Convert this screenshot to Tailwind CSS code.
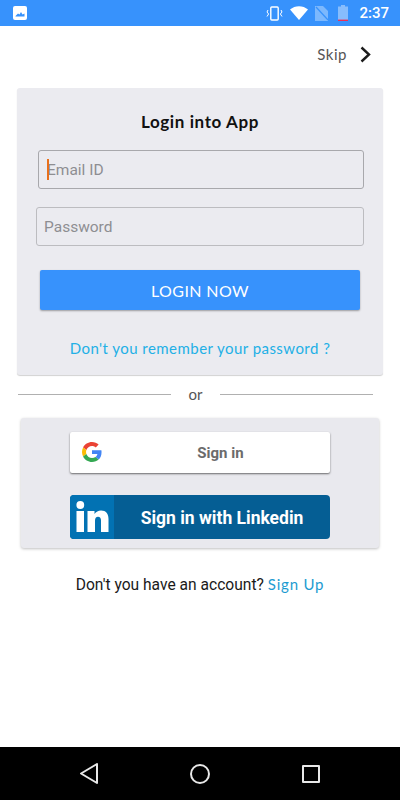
<!DOCTYPE html>
<html lang="en">
  <head>
    <meta charset="UTF-8" />
    <meta name="viewport" content="width=device-width, initial-scale=1.0" />
    <script src="https://cdn.jsdelivr.net/npm/@tailwindcss/browser@4"></script>
    <title>Login</title>
  </head>

  <body class="w-[400px] h-[800px] overflow-hidden bg-white flex flex-col font-['Roboto',sans-serif]">
    <!-- status bar -->
    <div class="h-[26px] shrink-0 bg-[#3792fc] flex items-center pl-[13px] pr-[11px] text-white">
      <svg width="14" height="14" viewBox="0 0 14 14">
        <rect width="14" height="14" rx="2" fill="#fff" />
        <path d="M2.5 10 L5 7.5 L6.5 8.6 L8 6 L9.5 8.4 L11.5 7.6 V10.5 H2.5Z" fill="#3792fc" />
      </svg>
      <div class="ml-auto flex items-center">
        <svg width="17" height="15" viewBox="0 0 17 15" fill="none" stroke="#fff">
          <rect x="4.8" y="1" width="7.4" height="13" rx="1" stroke-width="1.4" />
          <path d="M2 4 L1 6 L2.6 8 L1 10.5 M15 4 L16 6 L14.4 8 L16 10.5" stroke-width="1" />
        </svg>
        <svg class="ml-[7px]" width="18" height="14" viewBox="0 0 18 14">
          <path d="M0 3.6 C5 -1 13 -1 18 3.6 L9 14Z" fill="#fff" />
        </svg>
        <svg class="ml-[7px]" width="13" height="15" viewBox="0 0 13 15">
          <path d="M0 15 V0 H8 L13 5 V15Z" fill="#fff" fill-opacity="0.35" />
          <path d="M1 1 L13 14" stroke="#3792fc" stroke-width="1.2" />
        </svg>
        <svg class="ml-[10px]" width="10" height="16" viewBox="0 0 10 16">
          <path d="M3 0 H7 V1.5 H10 V16 H0 V1.5 H3Z" fill="#fff" fill-opacity="0.4" />
          <rect y="14.6" width="10" height="1.4" fill="#e8305a" />
        </svg>
        <span class="ml-[11px] text-[15px] leading-none font-medium">2:37</span>
      </div>
    </div>

    <!-- skip -->
    <div class="h-[62px] shrink-0 flex items-center justify-end pr-[29px] pb-[5px]">
      <span class="text-[15px] text-[#555] font-['Lato',sans-serif] tracking-[0.5px]">Skip</span>
      <svg class="ml-[13px]" width="11" height="17" viewBox="0 0 11 17" fill="none" stroke="#1c1c1c" stroke-width="2.4">
        <path d="M1.5 1.5 L9 8.5 L1.5 15.5" />
      </svg>
    </div>

    <!-- login card -->
    <div class="mx-[17px] h-[287px] shrink-0 bg-[#ebebf0] rounded-[3px] shadow-[0_1px_1px_rgba(0,0,0,0.18)] flex flex-col">
      <h1 class="mt-[23px] h-[22px] text-center text-[17px] leading-[22px] font-bold text-[#111] font-['Lato',sans-serif] tracking-[0.6px]">Login into App</h1>

      <div class="relative mt-[17px] ml-[21px] mr-[19px] h-[39px] border border-[#a8a8ac] rounded-[3px] flex items-center pl-[8px] pt-[2px] text-[15.500px] text-[#8e8e92]">
        Email ID
        <span class="absolute left-[8px] top-[8px] w-[2px] h-[21px] bg-[#e8701c]"></span>
      </div>
      <div class="mt-[18px] ml-[19px] mr-[19px] h-[39px] border border-[#bcbcc0] rounded-[3px] flex items-center pl-[7px] pt-[2px] text-[15.500px] text-[#8e8e92]">
        Password
      </div>

      <button class="mt-[24px] mx-[23px] h-[40px] bg-[#3792fc] rounded-[2px] shadow-[0_1px_2px_rgba(0,0,0,0.35)] text-white text-[16px] pt-[1px] font-['Lato',sans-serif] tracking-[0.4px]">LOGIN NOW</button>

      <a class="mt-[28px] text-center text-[15px] leading-[20px] text-[#22b0e6] font-['Lato',sans-serif] tracking-[0.45px]">Don't you remember your password ?</a>
    </div>

    <!-- divider -->
    <div class="mt-[9px] h-[20px] shrink-0 flex items-center pl-[18px] pr-[27px]">
      <div class="w-[153px] h-px bg-[#b0b0b0]"></div>
      <span class="w-[49px] text-center text-[15px] text-[#555] font-['Lato',sans-serif]">or</span>
      <div class="flex-1 h-px bg-[#b0b0b0]"></div>
    </div>

    <!-- social card -->
    <div class="mt-[14px] mx-[21px] h-[130px] shrink-0 bg-[#e9e9ee] rounded-[3px] shadow-[0_1px_3px_rgba(0,0,0,0.25)] flex flex-col items-center pt-[14px]">
      <button class="relative w-[260px] h-[41px] bg-white rounded-[2px] shadow-[0_1px_2px_rgba(0,0,0,0.55)] flex items-center justify-center pl-[41px] pt-[1px] text-[15px] font-bold text-[#6b6b6b]">
        <svg class="absolute left-[12px] top-[10px]" width="20" height="20" viewBox="0 0 48 48">
          <path fill="#EA4335" d="M24 9.5c3.5 0 6.700 1.300 9.100 3.500l6.800-6.800C35.800 2.400 30.300 0 24 0 14.600 0 6.500 5.400 2.600 13.200l7.900 6.100C12.400 13.700 17.700 9.500 24 9.500z" />
          <path fill="#4285F4" d="M46.900 24.500c0-1.600-.1-3.100-.4-4.500H24v9h12.900c-.6 3-2.200 5.500-4.700 7.200l7.700 6c4.500-4.200 7-10.300 7-17.700z" />
          <path fill="#FBBC05" d="M10.500 28.700c-.5-1.400-.8-3-.8-4.700s.3-3.300.8-4.700l-7.900-6.100C.9 16.500 0 20.100 0 24s.9 7.500 2.600 10.800l7.900-6.100z" />
          <path fill="#34A853" d="M24 48c6.500 0 11.900-2.100 15.900-5.800l-7.700-6c-2.200 1.400-4.900 2.300-8.200 2.300-6.300 0-11.600-4.200-13.500-9.800l-7.900 6.100C6.500 42.600 14.600 48 24 48z" />
        </svg>
        Sign in
      </button>
      <button class="mt-[22px] w-[260px] h-[44px] bg-[#055e94] rounded-[4px] overflow-hidden flex items-center text-white text-[17.500px] font-bold">
        <span class="w-[44px] h-[44px] shrink-0 bg-[#0272b3] flex items-center justify-center">
          <svg width="34" height="34" viewBox="0 0 34 34" fill="#fff">
            <circle cx="5.300" cy="5" r="3.900" />
            <rect x="1.500" y="11" width="7.500" height="21" />
            <path d="M12.500 11 H19.500 V14 C21 11.800 23.300 10.600 26 10.600 C31 10.600 33.500 13.800 33.500 19 V32 H26 V20.500 C26 18 25 16.700 23 16.700 C21 16.700 20 18 20 20.500 V32 H12.500Z" />
          </svg>
        </span>
        <span class="flex-1 text-center pt-[2px]">Sign in with Linkedin</span>
      </button>
    </div>

    <!-- sign up -->
    <p class="mt-[26px] h-[20px] shrink-0 text-center text-[15.600px] leading-[20px] text-[#1a1a1a] whitespace-nowrap">
      Don't you have an account?
      <span class="text-[15px] text-[#1d9bd1] font-['Lato',sans-serif] tracking-[0.8px]">Sign Up</span>
    </p>

    <!-- nav bar -->
    <div class="mt-auto h-[53px] shrink-0 bg-black relative flex items-center justify-between pl-[80px] pr-[80px]">
      <svg width="18" height="21" viewBox="0 0 18 21" fill="none" stroke="#e8e8e8" stroke-width="2" stroke-linejoin="round">
        <path d="M17 1 V20 L1 10.500Z" />
      </svg>
      <svg width="20" height="20" viewBox="0 0 20 20" fill="none" stroke="#e8e8e8" stroke-width="2">
        <circle cx="10" cy="10" r="9" />
      </svg>
      <svg width="18" height="18" viewBox="0 0 18 18" fill="none" stroke="#e8e8e8" stroke-width="2" stroke-linejoin="round">
        <rect x="1" y="1" width="16" height="16" />
      </svg>
    </div>
  </body>
</html>
